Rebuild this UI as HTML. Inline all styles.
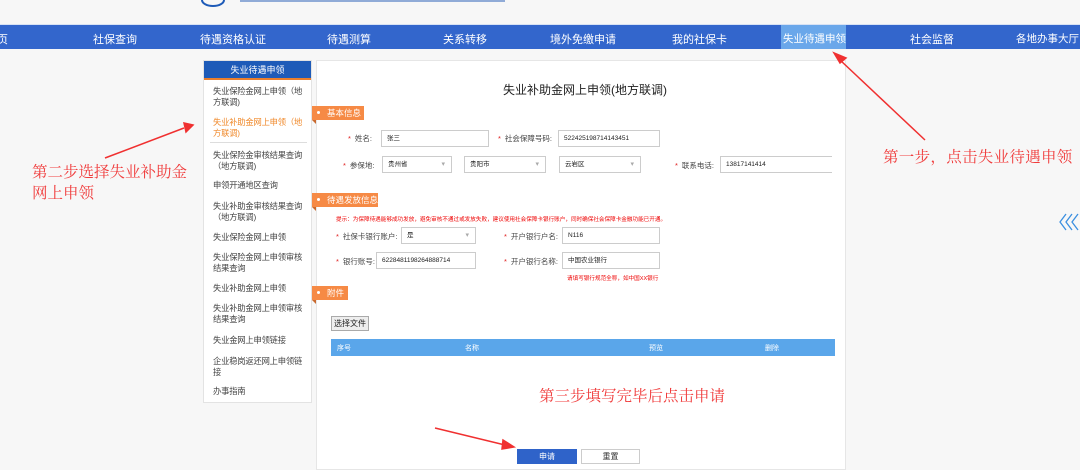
<!DOCTYPE html>
<html><head><meta charset="utf-8"><style>
*{margin:0;padding:0;box-sizing:border-box}
body{width:1080px;height:467px;overflow:hidden;background:#f7f7f7;font-family:"Liberation Sans","Noto Sans CJK SC",sans-serif;position:relative;color:#333}
.a{position:absolute;white-space:nowrap}
.nav{position:absolute;left:0;top:24px;width:1080px;height:25px;background:#3366cc;border-top:1px solid #d8e2f4}
.nav span{position:absolute;top:6px;color:#fff;font-size:11px}
.side{position:absolute;left:203px;top:60px;width:109px;height:343px;background:#fff;border:1px solid #e3e3e3}
.side .h{height:19px;background:#1e5bb8;color:#fff;font-size:9px;text-align:center;line-height:19px;border-bottom:2px solid #e97f2e}
.si{position:absolute;left:9px;font-size:8.3px;line-height:11px;color:#444;white-space:nowrap;letter-spacing:-0.2px}
.main{position:absolute;left:316px;top:60px;width:530px;height:410px;background:#fff;border:1px solid #e6e6e6}
.tag{position:absolute;left:312px;height:14px;background:#f68a45;color:#fff;font-size:8.5px;line-height:14px;padding-left:15px}
.tag:before{content:"";position:absolute;left:5px;top:5px;width:3px;height:3px;border-radius:2px;background:#fff}
.tag:after{content:"";position:absolute;left:0;top:14px;border-top:4px solid #c9692e;border-left:4px solid transparent}
.l{position:absolute;font-size:7.5px;color:#444;white-space:nowrap}
.l b{color:#e02020;font-weight:normal;margin-right:4px}
.in{position:absolute;height:17px;border:1px solid #ccc;background:#fff;font-size:6.5px;line-height:15px;padding-left:5px;color:#222}
.sel:after{content:"▾";position:absolute;right:6px;top:0;color:#aaa;font-size:7px}
.red{position:absolute;color:#e00;font-size:5.6px;white-space:nowrap}
.step{position:absolute;color:#f03c3c;font-family:"Liberation Serif","Noto Serif CJK SC",serif;font-size:15.5px;white-space:nowrap}
</style></head><body>
<svg class="a" style="left:198px;top:0" width="32" height="8"><path d="M4 0 A11 6 0 0 0 26 0" stroke="#1e5bb8" stroke-width="2" fill="none"/></svg>
<div class="a" style="left:240px;top:0;width:265px;height:2px;background:#2a5fb8;opacity:.5"></div>
<div class="nav">
<span style="left:-3px">页</span><span style="left:93px">社保查询</span><span style="left:200px">待遇资格认证</span><span style="left:327px">待遇测算</span><span style="left:443px">关系转移</span><span style="left:550px">境外免缴申请</span><span style="left:672px">我的社保卡</span>
<div style="position:absolute;left:781px;top:0;width:65px;height:24px;background:#6aa7ea"></div><span style="left:783px;font-size:10.5px">失业待遇申领</span>
<span style="left:910px">社会监督</span><span style="left:1016px;font-size:10.5px">各地办事大厅</span></div>
<div class="side"><div class="h">失业待遇申领</div>
<div class="si" style="top:25px">失业保险金网上申领（地<br>方联调)</div>
<div class="si" style="top:56px;color:#f08a2c">失业补助金网上申领（地<br>方联调)</div>
<div style="position:absolute;left:6px;top:81px;width:97px;border-top:1px solid #ddd"></div>
<div class="si" style="top:89px">失业保险金审核结果查询<br>（地方联调)</div>
<div class="si" style="top:119px">申领开通地区查询</div>
<div class="si" style="top:140px">失业补助金审核结果查询<br>（地方联调)</div>
<div class="si" style="top:171px">失业保险金网上申领</div>
<div class="si" style="top:191px">失业保险金网上申领审核<br>结果查询</div>
<div class="si" style="top:222px">失业补助金网上申领</div>
<div class="si" style="top:242px">失业补助金网上申领审核<br>结果查询</div>
<div class="si" style="top:274px">失业金网上申领链接</div>
<div class="si" style="top:295px">企业稳岗返还网上申领链<br>接</div>
<div class="si" style="top:325px">办事指南</div>
</div>
<div class="main"></div>
<div class="a" style="left:503px;top:81px;font-size:12px;color:#222">失业补助金网上申领(地方联调)</div>
<div class="tag" style="top:106px;width:52px">基本信息</div>
<div class="l" style="left:348px;top:133px"><b>*</b>姓名:</div><div class="in" style="left:381px;top:130px;width:108px">张三</div>
<div class="l" style="left:498px;top:133px"><b>*</b>社会保障号码:</div><div class="in" style="left:558px;top:130px;width:102px">522425198714143451</div>
<div class="l" style="left:343px;top:160px"><b>*</b>参保地:</div>
<div class="in sel" style="left:382px;top:156px;width:70px">贵州省</div>
<div class="in sel" style="left:464px;top:156px;width:82px">贵阳市</div>
<div class="in sel" style="left:559px;top:156px;width:82px">云岩区</div>
<div class="l" style="left:675px;top:160px"><b>*</b>联系电话:</div><div class="in" style="left:720px;top:156px;width:112px;border-right:none">13817141414</div>
<div class="tag" style="top:193px;width:66px">待遇发放信息</div>
<div class="red" style="left:336px;top:215px">提示：为保障待遇能够成功发放，避免审核不通过或发放失败，建议使用社会保障卡银行账户，同时确保社会保障卡金融功能已开通。</div>
<div class="l" style="left:336px;top:231px"><b>*</b>社保卡银行账户:</div><div class="in sel" style="left:401px;top:227px;width:75px">是</div>
<div class="l" style="left:504px;top:231px"><b>*</b>开户银行户名:</div><div class="in" style="left:562px;top:227px;width:98px">N116</div>
<div class="l" style="left:336px;top:256px"><b>*</b>银行账号:</div><div class="in" style="left:376px;top:252px;width:100px">6228481198264888714</div>
<div class="l" style="left:504px;top:256px"><b>*</b>开户银行名称:</div><div class="in" style="left:562px;top:252px;width:98px">中国农业银行</div>
<div class="red" style="left:567px;top:274px">请填写银行规范全称，如中国XX银行</div>
<div class="tag" style="top:286px;width:36px">附件</div>
<div class="a" style="left:331px;top:316px;width:38px;height:15px;background:#eee;border:1px solid #aaa;font-size:8px;line-height:13px;text-align:center;color:#222">选择文件</div>
<div class="a" style="left:331px;top:339px;width:504px;height:17px;background:#5aa6ea;font-size:7px;color:#fff">
<span class="a" style="left:6px;top:4px">序号</span><span class="a" style="left:134px;top:4px">名称</span><span class="a" style="left:318px;top:4px">预览</span><span class="a" style="left:434px;top:4px">删除</span></div>
<div class="step" style="left:539px;top:384px">第三步填写完毕后点击申请</div>
<div class="a" style="left:517px;top:449px;width:60px;height:15px;background:#2f63c9;color:#fff;font-size:8px;text-align:center;line-height:15px">申请</div>
<div class="a" style="left:581px;top:449px;width:59px;height:15px;background:#fff;border:1px solid #ccc;font-size:8px;text-align:center;line-height:13px">重置</div>
<div class="step" style="left:32px;top:162px;line-height:21px">第二步选择失业补助金<br>网上申领</div>
<div class="step" style="left:883px;top:145px;letter-spacing:0.3px">第一步，点击失业待遇申领</div>
<svg class="a" style="left:1058px;top:213px" width="22" height="18"><g stroke="#3b8fe0" stroke-width="1.3" fill="none"><path d="M8 1 L2 9 L8 17"/><path d="M14 1 L8 9 L14 17"/><path d="M20 1 L14 9 L20 17"/></g></svg>
<svg class="a" style="left:0;top:0" width="1080" height="467">
<g stroke="#f03030" stroke-width="1.5" fill="#f03030">
<line x1="925" y1="140" x2="840" y2="60"/><polygon points="834,53 846,58 840,63" />
<line x1="105" y1="158" x2="184" y2="128"/><polygon points="193,125 184,123 186,132"/>
<line x1="435" y1="428" x2="505" y2="445"/><polygon points="514,447 503,440 502,449"/>
</g></svg>
</body></html>
